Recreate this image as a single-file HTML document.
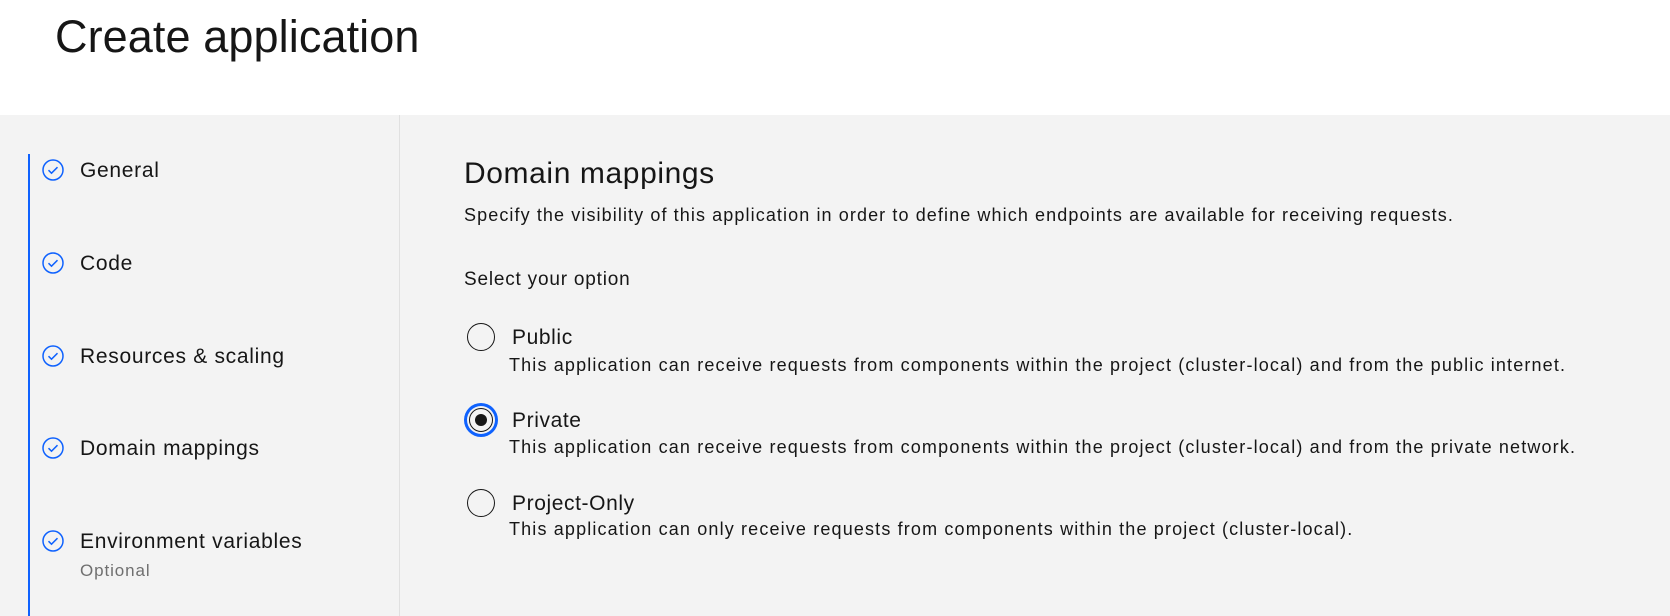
<!DOCTYPE html>
<html><head><meta charset="utf-8"><style>
*{margin:0;padding:0;box-sizing:border-box}
body{width:1670px;height:616px;overflow:hidden;background:#fff;font-family:"Liberation Sans",sans-serif;color:#161616;position:relative}
.t{position:absolute;white-space:nowrap;line-height:1}
.gray{position:absolute;left:0;top:115px;width:1670px;height:501px;background:#f3f3f3}
.div{position:absolute;left:399px;top:115px;width:1px;height:501px;background:#e0e0e0}
.bl{position:absolute;left:28px;top:154px;width:2px;height:462px;background:#0f62fe}
.nav{font-size:21px;left:80px;letter-spacing:0.7px}
.ic{position:absolute;left:42px;width:22px;height:22px}
.rad{position:absolute;left:467px;width:28px;height:28px;border:1.5px solid #161616;border-radius:50%}
.lab{font-size:21px;left:512px;letter-spacing:0.6px}
.desc{font-size:18px;left:509px;color:#161616;letter-spacing:1.15px}
</style></head><body>
<div class="t" style="left:55px;top:14px;font-size:45px;letter-spacing:0.1px">Create application</div>
<div class="gray"></div><div class="div"></div><div class="bl"></div>
<svg class="ic" style="top:159px" viewBox="0 0 22 22"><circle cx="11" cy="11" r="10" fill="none" stroke="#0f62fe" stroke-width="1.5"/><path d="M6.5 11.2l3 3 6-6" fill="none" stroke="#0f62fe" stroke-width="1.5"/></svg>
<svg class="ic" style="top:252px" viewBox="0 0 22 22"><circle cx="11" cy="11" r="10" fill="none" stroke="#0f62fe" stroke-width="1.5"/><path d="M6.5 11.2l3 3 6-6" fill="none" stroke="#0f62fe" stroke-width="1.5"/></svg>
<svg class="ic" style="top:345px" viewBox="0 0 22 22"><circle cx="11" cy="11" r="10" fill="none" stroke="#0f62fe" stroke-width="1.5"/><path d="M6.5 11.2l3 3 6-6" fill="none" stroke="#0f62fe" stroke-width="1.5"/></svg>
<svg class="ic" style="top:437px" viewBox="0 0 22 22"><circle cx="11" cy="11" r="10" fill="none" stroke="#0f62fe" stroke-width="1.5"/><path d="M6.5 11.2l3 3 6-6" fill="none" stroke="#0f62fe" stroke-width="1.5"/></svg>
<svg class="ic" style="top:530px" viewBox="0 0 22 22"><circle cx="11" cy="11" r="10" fill="none" stroke="#0f62fe" stroke-width="1.5"/><path d="M6.5 11.2l3 3 6-6" fill="none" stroke="#0f62fe" stroke-width="1.5"/></svg>
<div class="t nav" style="top:160px">General</div>
<div class="t nav" style="top:253px">Code</div>
<div class="t nav" style="top:346px">Resources &amp; scaling</div>
<div class="t nav" style="top:438px">Domain mappings</div>
<div class="t nav" style="top:531px">Environment variables</div>
<div class="t" style="left:80px;top:562px;font-size:17px;color:#6f6f6f;letter-spacing:0.9px">Optional</div>
<div class="t" style="left:464px;top:159px;font-size:30px;letter-spacing:0.6px">Domain mappings</div>
<div class="t" style="left:464px;top:206px;font-size:18px;letter-spacing:1.1px">Specify the visibility of this application in order to define which endpoints are available for receiving requests.</div>
<div class="t" style="left:464px;top:270px;font-size:19px;letter-spacing:0.8px">Select your option</div>
<div class="rad" style="top:323px"></div>
<div class="t lab" style="top:327px">Public</div>
<div class="t desc" style="top:356px">This application can receive requests from components within the project (cluster-local) and from the public internet.</div>
<div class="rad" style="top:406px;border:none;box-shadow:0 0 0 3px #0f62fe"><div style="position:absolute;inset:2px;border:1.5px solid #161616;border-radius:50%"></div><div style="position:absolute;left:8px;top:8px;width:12px;height:12px;background:#161616;border-radius:50%"></div></div>
<div class="t lab" style="top:410px">Private</div>
<div class="t desc" style="top:438px">This application can receive requests from components within the project (cluster-local) and from the private network.</div>
<div class="rad" style="top:489px"></div>
<div class="t lab" style="top:493px">Project-Only</div>
<div class="t desc" style="top:520px">This application can only receive requests from components within the project (cluster-local).</div>
</body></html>
